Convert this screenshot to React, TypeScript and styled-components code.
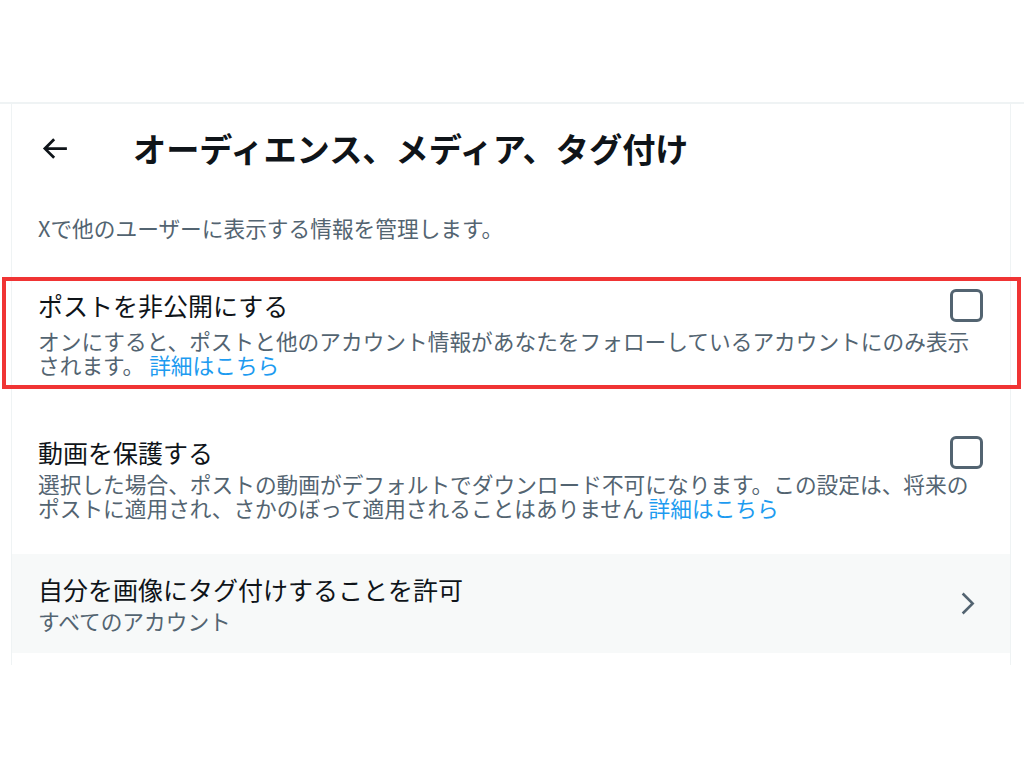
import React from "react";
import styled, { createGlobalStyle } from "styled-components";

const Global = createGlobalStyle`
  html, body { margin: 0; padding: 0; background: #ffffff; }
  body {
    font-family: "Noto Sans CJK JP", "Noto Sans", sans-serif;
    color: #0f1419;
  }
`;

const Page = styled.div`
  padding-top: 102px;
  width: 1024px;
`;

const TopRule = styled.div`
  height: 2px;
  background: #eff3f4;
`;

const Panel = styled.section`
  margin-left: 11px;
  width: 998px;
  border-left: 1px solid #eff3f4;
  border-right: 1px solid #eff3f4;
  padding-bottom: 12px;
`;

const Header = styled.header`
  height: 88px;
  display: flex;
  align-items: center;
  padding-left: 26px;
`;

const BackButton = styled.div`
  width: 95px;
  display: flex;
  align-items: center;
  color: #0f1419;
  svg { width: 33px; height: 33px; display: block; }
`;

const Title = styled.h1`
  margin: 0;
  font-size: 33.2px;
  line-height: 40px;
  font-weight: 700;
  color: #0f1419;
`;

const Intro = styled.p`
  margin: 0;
  padding: 23px 26px 36px;
  font-size: 21.7px;
  line-height: 26px;
  color: #536471;
`;

const Row = styled.div<{ $gap?: number; $shaded?: boolean; $top?: number; $bottom?: number }>`
  position: relative;
  margin-top: ${(p) => p.$gap ?? 0}px;
  padding: ${(p) => p.$top ?? 12}px 27px ${(p) => p.$bottom ?? 12}px 26px;
  background: ${(p) => (p.$shaded ? "#f7f9f9" : "transparent")};
`;

const RowHead = styled.div`
  display: flex;
  align-items: center;
  justify-content: space-between;
`;

const RowTitle = styled.div`
  font-size: 25px;
  line-height: 33px;
  color: #0f1419;
`;

const RowDesc = styled.div<{ $top?: number }>`
  margin-top: ${(p) => p.$top ?? 6}px;
  font-size: 21.7px;
  line-height: 24px;
  color: #536471;
`;

const Link = styled.a`
  display: inline-block;
  line-height: 24px;
  color: #1d9bf0;
  text-decoration: none;
`;

const Checkbox = styled.div`
  width: 33px;
  height: 33px;
  box-sizing: border-box;
  border: 3.3px solid #536471;
  border-radius: 6px;
  flex: none;
`;

const Chevron = styled.div`
  color: #536471;
  svg { width: 31px; height: 31px; display: block; }
`;

const Highlight = styled.div`
  position: absolute;
  top: 0;
  bottom: 0;
  left: -10px;
  right: -11px;
  border: 4px solid #f03434;
  pointer-events: none;
`;

export default function App() {
  return (
    <>
      <Global />
      <Page>
        <TopRule />
        <Panel>
          <Header>
            <BackButton>
              <svg viewBox="0 0 24 24" fill="currentColor">
                <path d="M7.414 13l5.043 5.04-1.414 1.42L3.586 12l7.457-7.46 1.414 1.42L7.414 11H21v2H7.414z" />
              </svg>
            </BackButton>
            <Title>オーディエンス、メディア、タグ付け</Title>
          </Header>
          <Intro>Xで他のユーザーに表示する情報を管理します。</Intro>

          <Row>
            <RowHead>
              <RowTitle>ポストを非公開にする</RowTitle>
              <Checkbox />
            </RowHead>
            <RowDesc $top={7}>
              オンにすると、ポストと他のアカウント情報があなたをフォローしているアカウントにのみ表示されます。 <Link href="#">詳細はこちら</Link>
            </RowDesc>
            <Highlight />
          </Row>

          <Row $gap={35}>
            <RowHead>
              <RowTitle>動画を保護する</RowTitle>
              <Checkbox />
            </RowHead>
            <RowDesc $top={3}>
              選択した場合、ポストの動画がデフォルトでダウンロード不可になります。この設定は、将来のポストに適用され、さかのぼって適用されることはありません <Link href="#">詳細はこちら</Link>
            </RowDesc>
          </Row>

          <Row $gap={22} $shaded $top={19} $bottom={20}>
            <RowHead>
              <div>
                <RowTitle>自分を画像にタグ付けすることを許可</RowTitle>
                <RowDesc $top={3}>すべてのアカウント</RowDesc>
              </div>
              <Chevron>
                <svg viewBox="0 0 24 24" fill="currentColor">
                  <path d="M14.586 12L7.543 4.96l1.414-1.42L17.414 12l-8.457 8.46-1.414-1.42L14.586 12z" />
                </svg>
              </Chevron>
            </RowHead>
          </Row>
        </Panel>
      </Page>
    </>
  );
}
